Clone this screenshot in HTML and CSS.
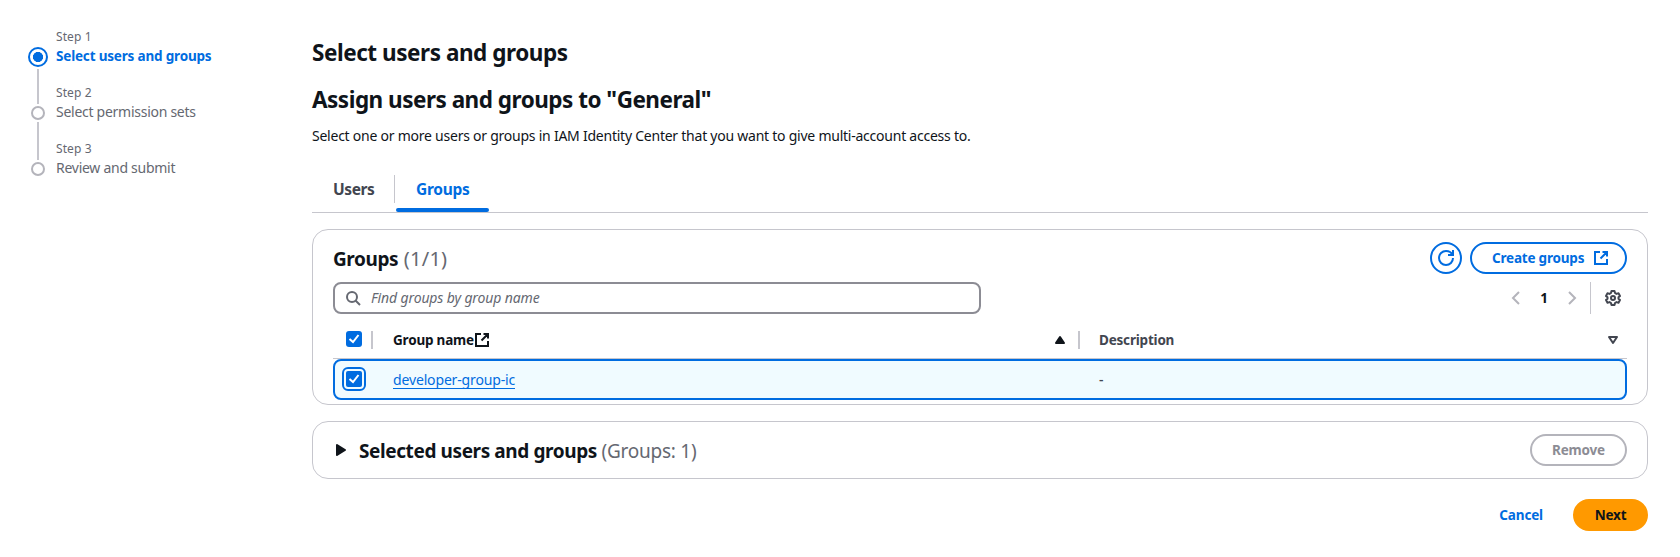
FILE: index.html
```html
<!DOCTYPE html>
<html lang="en">
<head>
<meta charset="utf-8">
<title>Select users and groups</title>
<link rel="stylesheet" href="styles.css">
</head>
<body>
<div class="page">
  <nav class="steps">
    <div class="step step-active">
      <div class="step-rail"><span class="dot dot-active"></span><span class="rail-line"></span></div>
      <div class="step-body"><span class="step-number">Step 1</span><span class="step-title step-title-active">Select users and groups</span></div>
    </div>
    <div class="step">
      <div class="step-rail"><span class="dot"></span><span class="rail-line"></span></div>
      <div class="step-body"><span class="step-number">Step 2</span><span class="step-title">Select permission sets</span></div>
    </div>
    <div class="step">
      <div class="step-rail"><span class="dot"></span></div>
      <div class="step-body"><span class="step-number">Step 3</span><span class="step-title">Review and submit</span></div>
    </div>
  </nav>
  <main class="content">
    <h1 class="title">Select users and groups</h1>
    <h2 class="subtitle">Assign users and groups to "General"</h2>
    <p class="description">Select one or more users or groups in IAM Identity Center that you want to give multi-account access to.</p>
    <div class="tabs">
      <div class="tab">Users</div>
      <div class="tab tab-active">Groups</div>
    </div>
    <section class="card groups">
      <div class="card-header">
        <h3 class="heading">Groups <span class="counter counter-groups">(1/1)</span></h3>
        <div class="actions">
          <button class="btn btn-icon" aria-label="Refresh"><svg width="16" height="16" viewBox="0 0 16 16" fill="none" stroke="currentColor" stroke-width="2"><path d="M10 5h5V0"/><path d="M15 8a7 7 0 1 1-7-7c3 0 5.500 1.600 6.600 4"/></svg></button>
          <button class="btn btn-create"><span>Create groups</span><svg width="16" height="16" viewBox="0 0 16 16" fill="none" stroke="currentColor" stroke-width="2"><path d="M7 2H2v12h12V9M9.500 2H14v4.500M14 2 7.500 8.500"/></svg></button>
        </div>
      </div>
      <div class="tools">
        <div class="search"><svg width="16" height="16" viewBox="0 0 16 16" fill="none" stroke="currentColor" stroke-width="2"><circle cx="7" cy="7" r="5"/><path d="m15 15-4.500-4.500"/></svg><span class="placeholder">Find groups by group name</span></div>
        <div class="pager">
          <svg class="chevron" width="16" height="16" viewBox="0 0 16 16" fill="none" stroke="currentColor" stroke-width="2"><path d="M11 2 5 8l6 6"/></svg>
          <span class="page-number">1</span>
          <svg class="chevron" width="16" height="16" viewBox="0 0 16 16" fill="none" stroke="currentColor" stroke-width="2"><path d="m5 2 6 6-6 6"/></svg>
          <span class="pager-divider"></span>
          <svg class="gear" width="16" height="16" viewBox="0 0 16 16" fill="none" stroke="currentColor" stroke-width="2" stroke-linejoin="round"><path d="M6.500 1h3l.5 2 1.500.9 2-.6L15 5.900 13.500 7.300v1.400L15 10.100l-1.500 2.600-2-.6-1.500.9-.5 2h-3L6 13l-1.500-.9-2 .6L1 10.100l1.500-1.400V7.300L1 5.900l1.500-2.600 2 .6L6 3z"/><circle cx="8" cy="8" r="2"/></svg>
        </div>
      </div>
      <div class="table">
        <div class="row row-head">
          <div class="cell-check"><span class="checkbox"><svg width="16" height="16" viewBox="0 0 16 16" fill="none" stroke="#fff" stroke-width="2"><path d="M3.500 8 7 11l5.500-7"/></svg></span></div>
          <div class="cell cell-name"><span>Group name</span><svg width="16" height="16" viewBox="0 0 16 16" fill="none" stroke="currentColor" stroke-width="2"><path d="M7 2H2v12h12V9M9.500 2H14v4.500M14 2 7.500 8.500"/></svg><svg class="sort" width="16" height="16" viewBox="0 0 16 16"><path fill="currentColor" stroke="currentColor" stroke-width="2" stroke-linejoin="round" d="m8 5 4 6H4z"/></svg></div>
          <div class="cell cell-desc"><span>Description</span><svg class="sort" width="16" height="16" viewBox="0 0 16 16"><path fill="none" stroke="currentColor" stroke-width="2" stroke-linejoin="round" d="M4 5h8l-4 6z"/></svg></div>
        </div>
        <div class="row row-selected">
          <div class="cell-check"><span class="checkbox checkbox-focus"><svg width="16" height="16" viewBox="0 0 16 16" fill="none" stroke="#fff" stroke-width="2"><path d="M3.500 8 7 11l5.500-7"/></svg></span></div>
          <div class="cell cell-name"><a class="link">developer-group-ic</a></div>
          <div class="cell cell-desc"><span>-</span></div>
        </div>
      </div>
    </section>
    <section class="card selection">
      <svg width="16" height="16" viewBox="0 0 16 16"><path fill="currentColor" stroke="currentColor" stroke-width="2" stroke-linejoin="round" d="m4 3 8 5-8 5z"/></svg>
      <h3 class="heading">Selected users and groups <span class="counter counter-selected">(Groups: 1)</span></h3>
      <button class="btn btn-disabled">Remove</button>
    </section>
    <div class="footer">
      <a class="cancel">Cancel</a>
      <button class="btn btn-primary">Next</button>
    </div>
  </main>
</div>
</body>
</html>
```
FILE: styles.css
```css
* { box-sizing: border-box; }
body {
  margin: 0;
  background: #fff;
  color: #0f141a;
  font: 400 14px/20px "Noto Sans", sans-serif;
}
h1, h2, h3, p { margin: 0; }
svg { display: block; flex: none; overflow: visible; }

.page {
  display: grid;
  grid-template-columns: 284px 1336px;
  min-height: 557px;
  padding: 28px 32px 0 28px;
}

.step { display: flex; height: 56px; }
.step-rail {
  width: 20px;
  margin-right: 8px;
  padding-top: 22px;
  display: flex;
  flex-direction: column;
  align-items: center;
}
.step-active .step-rail { padding-top: 19px; }
.dot {
  flex: none;
  width: 14px;
  height: 14px;
  border: 2px solid #b4b4bb;
  border-radius: 50%;
}
.dot-active {
  width: 20px;
  height: 20px;
  border-color: #006ce0;
  background: radial-gradient(circle, #006ce0 4.800px, #fff 5.300px);
}
.rail-line { flex: none; width: 2px; height: 38px; margin-top: 2px; background: #c6c6cd; }
.step-active .rail-line { height: 35px; }
.step-body { display: flex; flex-direction: column; padding-top: 1px; white-space: nowrap; color: #656871; }
.step-number { font-size: 12px; line-height: 16px; letter-spacing: 0.100px; }
.step-title { line-height: 20px; padding-top: 1px; letter-spacing: -0.270px; }
.step-title-active { font-size: 13.500px; font-weight: 700; letter-spacing: -0.180px; color: #006ce0; }

.content { white-space: nowrap; }
.title, .subtitle { font-size: 22.500px; line-height: 31px; font-weight: 700; letter-spacing: -0.500px; }
.title { padding-top: 9px; letter-spacing: -0.450px; }
.subtitle { padding-top: 16px; }
.description { padding-top: 11px; letter-spacing: -0.240px; }

.tabs { display: flex; margin-top: 24px; height: 43px; border-bottom: 1px solid #c6c6cd; }
.tab {
  width: 83px;
  height: 28px;
  margin-top: 5px;
  padding-left: 21px;
  border-right: 1px solid #c6c6cd;
  font-size: 15.500px;
  line-height: 28px;
  font-weight: 700;
  letter-spacing: -0.400px;
  color: #424650;
}
.tab-active {
  display: flex;
  flex-direction: column;
  justify-content: space-between;
  width: 93px;
  height: 37px;
  margin-left: 1px;
  padding-left: 0;
  border-right: 0;
  letter-spacing: -0.300px;
  color: #006ce0;
  text-indent: 20px;
}
.tab-active::after { content: ""; height: 4px; border-radius: 2px; background: #006ce0; }

.card { border: 1px solid #c6c6cd; border-radius: 16px; }
.groups { height: 176px; margin-top: 16px; padding: 12px 20px 0; }
.card-header { display: flex; justify-content: space-between; height: 32px; }
.heading { font-size: 19px; line-height: 32px; padding-top: 1px; font-weight: 700; letter-spacing: -0.400px; }
.counter { font-weight: 400; color: #656871; }
.counter-groups { font-size: 20px; margin-left: 1px; letter-spacing: 0.250px; }
.counter-selected { letter-spacing: -0.250px; }
.actions { display: flex; gap: 8px; }
.btn {
  display: flex;
  align-items: center;
  justify-content: center;
  height: 32px;
  padding: 0;
  border: 2px solid #006ce0;
  border-radius: 16px;
  background: #fff;
  color: #006ce0;
  font: 700 13.500px/20px "Noto Sans", sans-serif;
  letter-spacing: -0.200px;
}
.btn-icon { width: 32px; }
.btn-create { width: 157px; justify-content: space-between; padding: 0 16px 0 20px; }
.btn-disabled { width: 97px; border-color: #b4b4bb; color: #8c8c94; }
.btn-primary { width: 75px; border-color: #ff9900; background: #ff9900; color: #0f141a; }

.tools { display: flex; justify-content: space-between; margin-top: 8px; height: 32px; }
.search {
  display: flex;
  align-items: center;
  gap: 10px;
  width: 648px;
  padding-left: 10px;
  border: 2px solid #8c8c94;
  border-radius: 8px;
  color: #656871;
}
.placeholder { font-style: italic; letter-spacing: -0.130px; }
.pager { display: flex; align-items: center; padding-right: 6px; }
.chevron { color: #b4b4bb; }
.page-number { width: 40px; text-align: center; font-weight: 700; font-size: 13.500px; }
.pager-divider { width: 1px; height: 32px; margin: 0 14px 0 10px; background: #c6c6cd; }
.gear { color: #424650; }

.row { display: grid; grid-template-columns: 40px 707px 1fr; }
.row-head {
  height: 45px;
  padding-top: 17px;
  border-bottom: 1px solid #c6c6cd;
  font-size: 13.500px;
  font-weight: 700;
  letter-spacing: -0.200px;
  align-items: start;
}
.row-head .cell-check, .row-head .cell-name { border-right: 2px solid #c6c6cd; height: 18px; }
.cell-check { padding-left: 13px; }
.checkbox { display: block; width: 16px; height: 16px; border-radius: 3px; background: #006ce0; }
.checkbox-focus { border-radius: 2px; outline: 2px solid #006ce0; outline-offset: 2px; }
.cell { display: flex; align-items: center; padding-left: 20px; }
.cell-desc { height: 18px; padding: 0 6px 0 19px; color: #424650; }
.sort { margin-left: auto; }
.cell-name .sort { margin-right: 10px; }
.row-selected {
  grid-template-columns: 38px 707px 1fr;
  height: 41px;
  border: 2px solid #006ce0;
  border-radius: 8px;
  background: #f0fbff;
  align-items: center;
}
.row-selected .cell-check { height: 17px; padding-left: 11px; }
.row-selected .cell { height: 20px; }
.row-selected .cell-desc { font-weight: 500; }
.link { color: #006ce0; border-bottom: 1px solid #006ce0; line-height: 17px; letter-spacing: -0.150px; }

.selection { display: flex; align-items: center; height: 58px; margin-top: 16px; padding: 0 20px; }
.selection .heading { margin-left: 10px; }
.selection .btn { margin-left: auto; }
.footer { display: flex; justify-content: flex-end; align-items: center; gap: 30px; margin-top: 20px; }
.cancel { font-size: 13.500px; font-weight: 700; letter-spacing: -0.150px; color: #006ce0; }
```
